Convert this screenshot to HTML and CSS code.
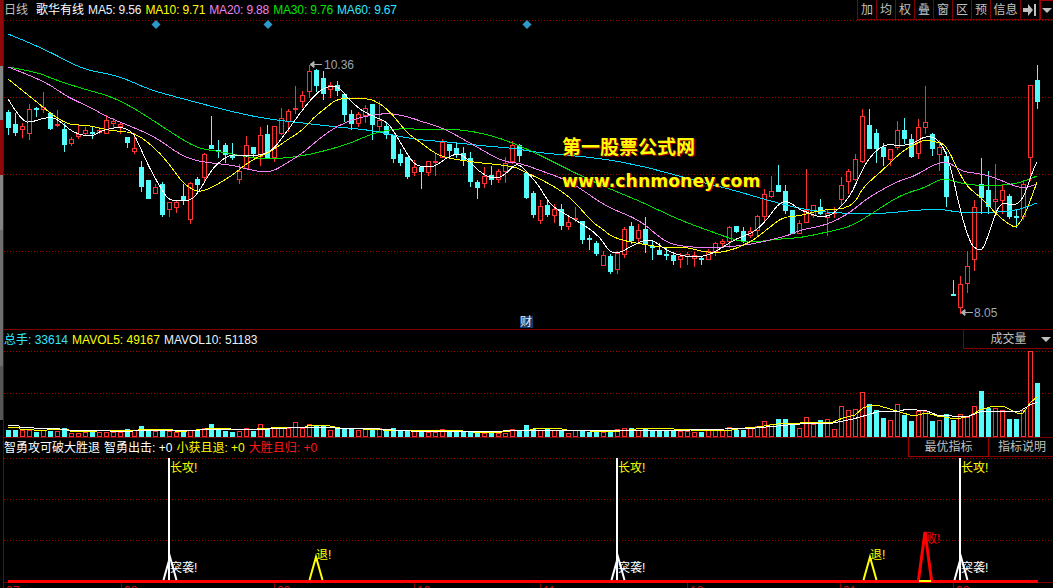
FILE: index.html
```html
<!DOCTYPE html>
<html lang="zh-CN">
<head>
    <meta charset="UTF-8">
    <title>歌华有线 日线</title>
    <link rel="stylesheet" href="styles.css">
</head>
<body>
    <div class="app">
        <div class="rail">
            <div class="rail-seg red h66"></div>
            <div class="rail-seg grey h54"></div>
            <div class="rail-seg red h55"></div>
            <div class="rail-seg grey h55"></div>
            <div class="rail-seg grey2 h136"></div>
            <div class="rail-seg grey3 h54"></div>
        </div>
        <div class="charts">
            <section class="panel panel-main">
                <header class="bar">
                    <div class="legend">
                        <span class="c-grey period">日线</span>
                        <span class="c-white name">歌华有线</span>
                        <span class="c-ma5">MA5: 9.56</span>
                        <span class="c-yellow">MA10: 9.71</span>
                        <span class="c-pink">MA20: 9.88</span>
                        <span class="c-green">MA30: 9.76</span>
                        <span class="c-cyan">MA60: 9.67</span>
                    </div>
                    <div class="tools">
                        <span class="tool">加</span>
                        <span class="tool">均</span>
                        <span class="tool">权</span>
                        <span class="tool">叠</span>
                        <span class="tool">窗</span>
                        <span class="tool">区</span>
                        <span class="tool">预</span>
                        <span class="tool wide">信息</span>
                        <span class="tool">
                            <svg width="14" height="12" viewBox="0 0 14 12"><path d="M0 4h5V0l5 6-5 6V8H0z M11 0h2v12h-2z" fill="#c0c0c0"/></svg>
                        </span>
                        <span class="tool caret-box"><i class="caret"></i></span>
                    </div>
                </header>
                <svg id="mainChart" class="plot" width="1049" height="309" viewBox="4 20 1049 309"></svg>
                <div class="watermark">
                    <div class="wm-title">第一股票公式网</div>
                    <div class="wm-url">www.chnmoney.com</div>
                </div>
            </section>

            <section class="panel panel-vol">
                <header class="bar">
                    <div class="legend">
                        <span class="c-cyan">总手: 33614</span>
                        <span class="c-yellow">MAVOL5: 49167</span>
                        <span class="c-ma5">MAVOL10: 51183</span>
                    </div>
                    <div class="btn btn-vol">成交量<i class="caret"></i></div>
                </header>
                <svg id="volChart" class="plot" width="1049" height="87" viewBox="4 350 1049 87"></svg>
            </section>

            <section class="panel panel-sig">
                <header class="bar">
                    <div class="legend">
                        <span class="c-white">智勇攻可破大胜退</span>
                        <span class="c-white">智勇出击: +0</span>
                        <span class="c-yellow">小获且退: +0</span>
                        <span class="c-red">大胜且归: +0</span>
                    </div>
                    <div class="btns">
                        <div class="btn btn-best">最优指标</div>
                        <div class="btn btn-help">指标说明</div>
                    </div>
                </header>
                <svg id="sigChart" class="plot" width="1049" height="130" viewBox="4 458 1049 130"></svg>
            </section>
        </div>
    </div>
    <script src="script.js"></script>
</body>
</html>
```

FILE: styles.css
```css
* { margin: 0; padding: 0; box-sizing: border-box; }
html, body { background: #000; overflow: hidden; }
body {
    width: 1053px;
    height: 588px;
    font-family: "Liberation Sans", "Noto Sans CJK SC", sans-serif;
    font-size: 12px;
    line-height: 1;
}
.app { display: flex; height: 588px; }
.rail {
    width: 4px;
    flex: none;
    border-right: 1px solid #800000;
    display: flex;
    flex-direction: column;
}
.rail-seg { width: 3px; }
.red { background: #8e0a0a; }
.grey { background: #858585; }
.grey2 { background: #6e6e6e; }
.grey3 { background: #555; }
.h66 { height: 66px; }
.h54 { height: 54px; }
.h55 { height: 55px; }
.h136 { height: 136px; }

.charts { flex: 1; display: flex; flex-direction: column; min-width: 0; }
.panel { position: relative; }
.panel-main { height: 329px; }
.panel-vol { height: 108px; border-top: 1px solid #800000; }
.panel-sig { height: 151px; border-top: 1px solid #800000; }
.bar {
    display: flex;
    justify-content: space-between;
    align-items: flex-start;
    height: 20px;
}
.plot { display: block; }

.legend { display: flex; gap: 4px; padding-top: 4px; white-space: nowrap; }
.panel-main .legend { letter-spacing: -0.15px; }
.period { margin-right: 4px; letter-spacing: 0; }
.name { letter-spacing: 0; }
.c-grey { color: #c0c0c0; }
.c-white { color: #fff; }
.c-ma5 { color: #eaf2ff; }
.c-yellow { color: #ffff00; }
.c-pink { color: #ee82ee; }
.c-green { color: #00e600; }
.c-cyan { color: #33e6ff; }
.c-red { color: #ff1a1a; }

.tools { display: flex; height: 20px; border-left: 1px solid #800000; }
.tool {
    width: 19px;
    height: 20px;
    display: flex;
    align-items: center;
    justify-content: center;
    color: #c0c0c0;
    border-right: 1px solid #800000;
    border-bottom: 1px solid #800000;
}
.tool.wide { width: 30px; }
.tool.caret-box { width: 13px; border-right: 0; border-left: 1px solid #a00000; border-top: 1px solid #a00000; }
.caret {
    display: inline-block;
    width: 0;
    height: 0;
    border-left: 5px solid transparent;
    border-right: 5px solid transparent;
    border-top: 5px solid #c0c0c0;
}

.btn {
    display: flex;
    align-items: center;
    justify-content: center;
    height: 19px;
    color: #c0c0c0;
    border-bottom: 1px solid #800000;
    border-left: 1px solid #800000;
}
.btns { display: flex; }
.btn-vol { width: 90px; position: relative; }
.btn-vol .caret { position: absolute; right: 2px; top: 7px; }
.btn-best { width: 81px; border-bottom-color: #a00000; border-right: 1px solid #a00000; border-left-color: #a00000; }
.btn-help { width: 64px; border-left: 0; padding-left: 2px; }

.watermark {
    position: absolute;
    left: 558px;
    top: 136px;
    color: #ffff00;
    font-weight: bold;
    white-space: nowrap;
}
.wm-title {
    font-size: 19px;
    line-height: 24px;
    text-shadow: 1px 1px 0 #a00000;
}
.wm-url {
    margin-top: 11px;
    font-family: "DejaVu Sans", sans-serif;
    font-size: 17.3px;
    line-height: 20px;
    text-shadow: 1px 1px 0 #a00000;
}

.plot text { font-family: "Liberation Sans", "Noto Sans CJK SC", sans-serif; font-size: 12px; }
```

FILE: script.js
```js
// candles: high, body top, body bottom, low, colour (r = up, c = down)
const candles = [
    [110,112,127,134,'c'],[113,124,132,135,'c'],[123,126,129,137,'r'],[104,109,133,139,'r'],[107,108,109,116,'c'],
    [92,107,109,112,'r'],[112,113,128,129,'c'],[110,124,125,126,'r'],[123,129,144,151,'c'],[137,139,143,145,'r'],
    [124,134,136,138,'r'],[127,130,133,135,'r'],[127,132,133,138,'c'],[127,130,132,133,'r'],[115,120,133,133,'r'],
    [118,121,123,128,'r'],[122,124,126,133,'r'],[137,137,142,147,'c'],[133,148,151,153,'r'],[161,167,186,191,'c'],
    [180,180,198,198,'c'],[184,187,193,193,'r'],[182,184,214,216,'c'],[202,202,209,216,'r'],[201,202,207,212,'r'],
    [184,196,200,204,'c'],[182,183,219,223,'r'],[177,179,184,191,'c'],[153,154,177,181,'r'],[116,145,148,148,'c'],
    [140,150,151,157,'c'],[143,145,154,162,'c'],[143,155,157,159,'c'],[164,171,179,183,'r'],[136,145,168,168,'r'],
    [147,147,153,157,'c'],[127,135,156,165,'r'],[125,134,157,158,'c'],[126,126,157,161,'r'],[108,118,133,134,'r'],
    [109,111,121,131,'r'],[86,108,109,113,'r'],[91,95,101,107,'r'],[65,71,91,97,'r'],[69,70,85,91,'c'],
    [71,78,93,99,'c'],[82,85,89,97,'r'],[81,85,90,95,'c'],[94,94,114,121,'c'],[110,114,123,129,'c'],
    [112,114,123,126,'r'],[105,108,115,122,'r'],[104,104,124,139,'c'],[101,120,126,131,'r'],[122,126,134,138,'c'],
    [135,135,158,162,'c'],[149,154,162,165,'c'],[157,157,176,178,'c'],[160,167,172,175,'r'],[167,167,171,188,'c'],
    [161,161,172,175,'r'],[153,161,162,175,'r'],[139,142,157,157,'r'],[144,144,150,157,'c'],[142,148,153,157,'c'],
    [147,153,160,165,'c'],[152,158,181,186,'c'],[180,182,187,198,'c'],[167,176,183,187,'r'],[166,175,179,184,'c'],
    [169,171,179,182,'r'],[157,163,171,182,'r'],[141,145,161,163,'r'],[144,145,155,161,'c'],[173,173,197,198,'c'],
    [191,193,214,217,'c'],[200,206,220,223,'r'],[200,205,214,216,'c'],[204,209,215,222,'r'],[204,209,225,229,'c'],
    [215,222,226,229,'r'],[207,218,219,221,'r'],[221,221,239,243,'c'],[235,238,239,249,'c'],[241,243,253,255,'c'],
    [251,255,265,265,'r'],[254,256,271,273,'c'],[251,253,269,273,'r'],[227,229,254,257,'r'],[222,226,240,243,'c'],
    [224,230,238,243,'r'],[217,229,244,252,'c'],[241,246,247,259,'c'],[243,250,254,254,'c'],[247,254,255,259,'c'],
    [252,255,260,264,'c'],[253,256,259,267,'r'],[252,254,256,264,'r'],[252,255,258,266,'r'],[256,258,259,264,'c'],
    [249,251,259,259,'r'],[242,243,251,255,'r'],[239,241,243,247,'r'],[226,227,241,247,'r'],[226,226,231,232,'c'],
    [227,231,241,242,'c'],[227,231,235,237,'r'],[215,216,230,235,'r'],[189,194,216,220,'r'],[176,191,196,197,'r'],
    [165,185,191,191,'c'],[185,191,210,213,'c'],[210,210,233,233,'c'],[220,223,233,233,'r'],[169,210,222,222,'r'],
    [205,205,215,217,'r'],[199,207,213,214,'c'],[210,213,217,235,'r'],[207,212,213,217,'r'],[177,185,199,204,'r'],
    [169,171,181,193,'r'],[154,159,179,180,'r'],[109,116,161,162,'r'],[109,125,148,148,'c'],[129,133,148,162,'c'],
    [143,147,156,165,'c'],[149,149,159,165,'r'],[121,130,147,149,'r'],[118,130,138,143,'c'],[134,139,156,157,'c'],
    [119,127,153,158,'r'],[86,122,127,133,'r'],[133,134,148,155,'c'],[140,147,154,170,'r'],[152,156,196,206,'c'],
    [280,294,295,295,'c'],[276,284,307,313,'r'],[251,266,283,292,'r'],[200,207,259,270,'r'],[158,184,197,213,'c'],
    [171,190,206,213,'c'],[164,199,201,213,'r'],[185,190,200,213,'r'],[194,196,216,218,'c'],[210,216,217,227,'c'],
    [180,184,216,219,'r'],[85,85,157,180,'r'],[65,80,101,108,'c']
];

const volHeights = [
    7,7,7,7,5,7,6,6,9,4,4,5,6,5,5,5,5,8,7,11,7,6,7,6,5,5,7,6,9,13,8,6,5,6,9,6,13,9,10,10,9,15,9,13,11,11,7,8,8,9,7,8,7,9,6,9,
    7,6,6,6,5,5,8,6,5,5,5,4,4,4,4,4,8,7,12,8,7,8,7,7,4,7,6,5,5,5,5,8,9,9,7,8,7,7,7,7,6,6,5,5,8,8,7,10,7,7,9,11,16,13,18,18,13,
    9,20,13,17,18,8,31,27,28,45,33,27,19,17,33,22,16,26,26,16,17,23,17,23,20,31,46,29,29,27,18,18,27,86,54
];

const maLines = [
    { color: '#00d8ff', pts: [8,34, 43,48, 83,70, 117,75, 150,90, 180,98, 233,112, 267,119, 303,123, 337,127, 370,130, 397,136, 420,140, 450,142, 483,146, 513,148, 540,153, 600,158, 647,167, 693,180, 733,190, 760,198, 800,209, 833,213, 880,214, 917,210, 943,209, 960,213, 1013,212, 1037,203] },
    { color: '#00e000', pts: [8,67, 37,72, 53,79, 80,88, 113,97, 137,110, 160,125, 183,140, 200,149, 217,151, 247,157, 267,159, 300,157, 347,145, 373,133, 400,128, 427,130, 457,129, 487,134, 513,143, 540,155, 573,172, 607,188, 640,201, 677,219, 707,230, 740,242, 757,242, 777,239, 800,238, 827,232, 850,227, 873,213, 900,195, 927,187, 937,180, 948,179, 963,184, 987,186, 1017,184, 1037,176] },
    { color: '#f080f0', pts: [8,67, 43,80, 67,97, 90,107, 107,117, 135,128, 157,138, 180,155, 200,162, 233,165, 250,170, 270,173, 287,163, 303,153, 320,138, 337,126, 357,118, 383,113, 403,115, 423,122, 443,128, 470,143, 503,162, 520,163, 547,173, 567,180, 587,193, 607,207, 640,220, 660,238, 673,245, 700,248, 733,247, 763,242, 790,235, 800,230, 827,225, 850,213, 867,198, 900,180, 913,177, 933,165, 943,162, 950,163, 963,172, 977,173, 993,177, 1007,183, 1023,189, 1037,184] },
    { color: '#ffff00', pts: [8,79, 43,107, 55,117, 70,125, 88,125, 110,131, 135,132, 157,150, 170,165, 182,182, 193,190, 200,192, 213,187, 233,175, 247,163, 260,156, 270,152, 287,140, 303,130, 313,118, 327,107, 338,98, 367,98, 380,103, 393,115, 407,133, 420,142, 437,155, 453,159, 480,163, 513,166, 525,172, 540,179, 557,188, 573,200, 593,223, 600,227, 613,238, 640,244, 667,248, 687,247, 703,252, 723,253, 750,243, 770,227, 783,217, 800,216, 817,211, 833,209, 843,209, 855,203, 863,187, 883,170, 900,153, 913,145, 926,139, 933,142, 945,143, 957,168, 967,187, 982,198, 997,215, 1010,225, 1017,228, 1027,210, 1037,182] },
    { color: '#ffffff', pts: [8,99, 22,122, 33,122, 43,118, 55,117, 70,130, 78,134, 92,137, 100,131, 113,128, 122,127, 133,132, 140,147, 148,165, 160,187, 168,199, 175,201, 191,201, 200,190, 213,167, 230,154, 240,156, 253,156, 270,153, 283,137, 300,113, 313,97, 323,88, 337,85, 347,97, 360,110, 377,118, 387,122, 393,130, 403,147, 413,163, 421,167, 435,167, 447,157, 460,153, 468,160, 483,175, 497,179, 507,173, 517,162, 528,173, 540,187, 550,205, 567,215, 587,227, 600,237, 610,253, 620,253, 633,245, 650,238, 663,248, 677,255, 693,257, 707,256, 720,249, 737,238, 753,233, 767,220, 777,205, 787,200, 800,210, 807,212, 818,217, 830,216, 837,210, 850,197, 862,170, 870,157, 880,147, 890,144, 898,146, 913,144, 926,135, 940,140, 950,163, 960,210, 970,243, 977,250, 983,250, 990,230, 1000,201, 1013,206, 1023,200, 1033,170, 1037,162] }
];

const volLines = [
    { color: '#ffff00', pts: [8,427, 19,427, 20,429, 33,429, 34,430, 47,430, 54,429, 67,429, 70,431, 97,431, 110,430, 137,431, 140,429, 170,429, 175,431, 187,431, 214,428, 222,428, 230,429, 257,429, 285,427, 305,427, 310,425, 325,425, 340,428, 353,428, 363,429, 377,429, 383,430, 400,430, 423,430, 453,430, 473,432, 502,432, 510,431, 530,430, 537,428, 557,428, 567,430, 590,431, 620,431, 630,430, 643,428, 657,428, 690,430, 725,431, 745,428, 757,427, 777,424, 800,423, 807,422, 817,423, 833,422, 843,418, 855,415, 863,408, 872,405, 880,406, 890,409, 900,412, 913,416, 927,413, 937,416, 957,419, 970,416, 980,410, 990,407, 1003,406, 1017,413, 1023,413, 1030,403, 1037,397] },
    { color: '#ffffff', pts: [8,425, 19,426, 20,427, 33,427, 34,428, 53,428, 67,430, 107,430, 110,431, 133,431, 138,430, 200,430, 230,429, 267,430, 270,428, 287,428, 293,427, 330,427, 335,428, 367,428, 393,430, 410,431, 460,432, 503,431, 525,430, 590,430, 660,430, 690,430, 725,429, 755,428, 777,426, 800,424, 833,423, 853,419, 867,415, 880,411, 900,411, 907,409, 927,411, 937,415, 967,417, 980,412, 1020,411, 1030,405, 1037,402] }
];

const signals = [
    { x: 169, type: 'attack' },
    { x: 316, type: 'retreat' },
    { x: 617, type: 'attack' },
    { x: 870, type: 'retreat' },
    { x: 925, type: 'win' },
    { x: 960, type: 'attack' }
];

const dates = [[3,'07'],[121,'08'],[274,'09'],[414,'10'],[540,'11'],[687,'12'],[840,'01'],[953,'02']];

const RED = '#ff3232';
const CYAN = '#54fcfc';

function candleX(i) { return 8 + 7 * i; }

function rect(x, y, w, h, fill) {
    return `<rect x="${x}" y="${y}" width="${w}" height="${h}" fill="${fill}"/>`;
}

function hollow(x, y, w, h, stroke) {
    return `<rect x="${x + 0.5}" y="${y + 0.5}" width="${w - 1}" height="${h - 1}" fill="#000" stroke="${stroke}"/>`;
}

function gridLine(y) {
    return `<line x1="4" x2="1053" y1="${y + 0.5}" y2="${y + 0.5}" stroke="#a00000" stroke-dasharray="1 2" shape-rendering="crispEdges"/>`;
}

function smoothPath(p, color) {
    let d = `M${p[0]} ${p[1]}`;
    for (let i = 2; i < p.length - 2; i += 2) {
        d += ` Q${p[i]} ${p[i + 1]} ${(p[i] + p[i + 2]) / 2} ${(p[i + 1] + p[i + 3]) / 2}`;
    }
    d += ` L${p[p.length - 2]} ${p[p.length - 1]}`;
    return `<path d="${d}" fill="none" stroke="${color}" shape-rendering="crispEdges"/>`;
}

function label(x, y, str, fill) {
    return `<text x="${x}" y="${y}" fill="${fill}">${str}</text>`;
}

function drawMain() {
    let s = [20, 97, 174, 251].map(gridLine).join('');
    s += '<g shape-rendering="crispEdges">';
    candles.forEach((c, i) => {
        const x = candleX(i);
        const color = c[4] === 'r' ? RED : CYAN;
        s += rect(x, c[0], 1, c[3] - c[0] + 1, color);
        const h = Math.max(c[2] - c[1] + 1, 2);
        s += c[4] === 'r' ? hollow(x - 2, c[1], 5, h, color) : rect(x - 2, c[1], 5, h, color);
    });
    s += '</g>';
    maLines.forEach(l => { s += smoothPath(l.pts, l.color); });
    [156, 268, 527].forEach(x => {
        s += `<polygon points="${x},20 ${x + 4.5},24.5 ${x},29 ${x - 4.5},24.5" fill="#2b9ac9"/>`;
    });
    s += '<path d="M322 64.5H312 M310 64.5l4-3v6z" stroke="#b0b0b0" fill="#b0b0b0"/>';
    s += label(324, 69, '10.36', '#9aa6b4');
    s += '<path d="M973 312.5H963 M961 312.5l4-3v6z" stroke="#b0b0b0" fill="#b0b0b0"/>';
    s += label(974, 317, '8.05', '#9aa6b4');
    s += rect(520, 316, 13, 12, '#123a6e');
    s += label(520, 326, '财', '#e8e8e8');
    document.getElementById('mainChart').innerHTML = s;
}

function drawVol() {
    let s = [351, 393].map(gridLine).join('');
    s += '<g shape-rendering="crispEdges">';
    volHeights.forEach((h, i) => {
        const x = candleX(i);
        s += candles[i][4] === 'r' ? hollow(x - 2, 437 - h, 5, h, RED) : rect(x - 2, 437 - h, 5, h, CYAN);
    });
    s += '</g>';
    volLines.forEach(l => {
        const pts = [];
        for (let i = 0; i < l.pts.length; i += 2) pts.push(`${l.pts[i]},${l.pts[i + 1]}`);
        s += `<polyline points="${pts.join(' ')}" fill="none" stroke="${l.color}" shape-rendering="crispEdges"/>`;
    });
    document.getElementById('volChart').innerHTML = s;
}

function triangle(x, top, halfBase, color, width) {
    return `<polyline points="${x - halfBase},580 ${x},${top} ${x + halfBase},580" fill="none" stroke="${color}" stroke-width="${width}"/>`;
}

function drawSig() {
    let s = [458, 499, 540].map(gridLine).join('');
    s += rect(4, 582, 1049, 1, '#800000');
    s += rect(8, 580, 1030, 3, '#ff0000');
    signals.forEach(sig => {
        if (sig.type === 'attack') {
            s += rect(sig.x - 1, 458, 2, 122, '#fff');
            s += triangle(sig.x + 1, 557, 6.5, '#fff', 2);
            s += label(sig.x + 1, 472, '长攻!', '#ffff00');
            s += label(sig.x + 1, 572, '突袭!', '#fff');
        } else if (sig.type === 'retreat') {
            s += triangle(sig.x, 557, 6.5, '#ffff00', 2);
            s += label(sig.x, 559, '退!', '#ffff00');
        } else {
            s += triangle(sig.x, 532, 6.5, '#ff0000', 3);
            s += rect(sig.x - 6, 580, 12, 2, '#ffff00');
            s += label(sig.x, 543, '败!', '#ff0000');
        }
    });
    dates.forEach(d => {
        s += rect(d[0], 583, 1, 5, '#800000');
        s += label(d[0] + 3, 595, d[1], '#d01010');
    });
    document.getElementById('sigChart').innerHTML = s;
}

drawMain();
drawVol();
drawSig();
```
